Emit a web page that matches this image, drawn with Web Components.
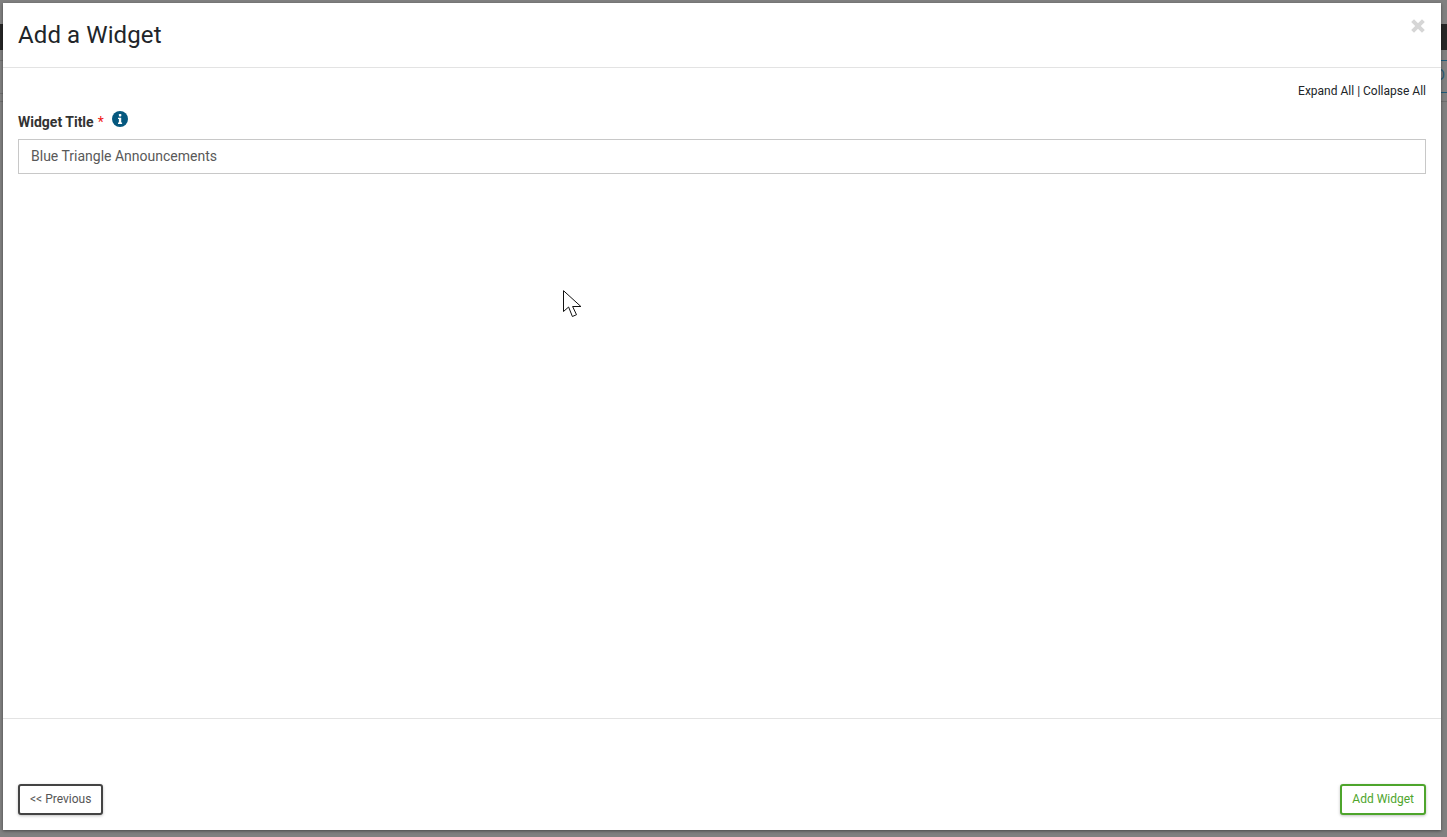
<!DOCTYPE html>
<html lang="en"><head><meta charset="utf-8"><title>Add a Widget</title>
<style>
html,body{margin:0;padding:0;height:100%;overflow:hidden;background:#808080;font-family:Roboto,"Liberation Sans",sans-serif}
</style></head><body>
<backdrop-page></backdrop-page>
<widget-modal heading="Add a Widget">
  <field-row label="Widget Title" value="Blue Triangle Announcements"></field-row>
  <modal-button slot="left" tone="dark">&lt;&lt; Previous</modal-button>
  <modal-button slot="right" tone="green">Add Widget</modal-button>
</widget-modal>
<fake-cursor></fake-cursor>
<script>
function def(name,html,init){customElements.define(name,class extends HTMLElement{
  connectedCallback(){if(this.shadowRoot)return;const r=this.attachShadow({mode:'open'});r.innerHTML=html;if(init)init(this,r);}
});}
def('backdrop-page',`<style>
:host{display:block;height:837px;background:#808080;overflow:hidden}
.gap{height:24px}
.bar{height:26px;background:#262626}
.sub{height:42px;margin-top:10px;border-top:1px solid #6e6e6e;border-bottom:1px solid #6e6e6e;box-sizing:border-box;display:flex;align-items:flex-start}
.left{flex:1;height:33px;border-bottom:1px solid #6e6e6e;box-sizing:border-box}
.tab{width:30px;height:33px;margin-top:-1px;box-sizing:border-box;border-top:1px solid #1d5a78;border-bottom:1px solid #1d5a78;text-align:right;padding-right:2px;font:14px/29px Roboto,sans-serif;color:#2a5a72;white-space:nowrap}
</style><div class="gap"></div><div class="bar"></div>
<div class="sub"><div class="left"></div><div class="tab">D</div></div>`);
def('widget-modal',`<style>
:host{position:absolute;left:3px;top:3px;width:1438px;height:827px;background:#fff;display:flex;flex-direction:column;color:#212529;box-shadow:0 1px 3px rgba(0,0,0,.45)}
header{height:65px;flex:none;box-sizing:border-box;border-bottom:1px solid #e3e3e3;padding:0 15px;display:flex;align-items:flex-start;justify-content:space-between}
h1{margin:17px 0 0;font:400 24px/30px Roboto,sans-serif;letter-spacing:.1px;color:#212529}
.x{width:16px;height:16px;margin:15px 0 0;display:block}
main{flex:1;min-height:0;padding:0 15px;box-sizing:border-box}
.links{display:flex;justify-content:flex-end;margin-top:15px;font:12px/16px Roboto,sans-serif;color:#212529;height:16px}
footer{height:112px;flex:none;box-sizing:border-box;border-top:1px solid #e3e3e3;padding:65px 15px 0;display:flex;justify-content:space-between;align-items:flex-start}
</style>
<header><h1 id="t"></h1><svg class="x" viewBox="0 0 16 16" aria-label="Close"><path d="M2.6 2.6 13.4 13.4M13.4 2.6 2.6 13.4" stroke="#d6d6d6" stroke-width="4" fill="none"/></svg></header>
<main><div class="links">Expand All&nbsp;|&nbsp;Collapse All</div><slot></slot></main>
<footer><slot name="left"></slot><slot name="right"></slot></footer>`,(h,r)=>{r.getElementById('t').textContent=h.getAttribute('heading');});
def('field-row',`<style>
:host{display:block;margin-top:6px}
.l{display:flex;align-items:flex-start;height:34px;font:700 14px/20px Roboto,sans-serif;color:#333}
.l b{font-weight:700;padding-top:7px;line-height:20px}
.s{color:#f01818;font-weight:400;margin-left:4px;padding-top:7px}
svg{width:16px;height:16px;margin:6px 0 0 8px;display:block}
.i{box-sizing:border-box;height:35px;border:1px solid #c8c8c8;padding:0 12px;font:14px/33px Roboto,sans-serif;color:#595959}
</style><div class="l"><b id="n"></b><span class="s">*</span>
<svg viewBox="0 0 16 16"><circle cx="8" cy="8" r="8" fill="#05587f"/><rect x="6.9" y="3" width="2.4" height="2.4" rx=".6" fill="#fff"/><path d="M6 6.7H9.2V11.6H10.1V12.9H6V11.6H6.9V8H6Z" fill="#fff"/></svg></div>
<div class="i" id="v"></div>`,(h,r)=>{r.getElementById('n').textContent=h.getAttribute('label');r.getElementById('v').textContent=h.getAttribute('value');});
def('modal-button',`<style>
:host{display:block;box-sizing:border-box;height:31px;border:2px solid #444;border-radius:3px;padding:0 10px;font:12px/27px Roboto,sans-serif;color:#555;background:#fff;box-shadow:0 1px 3px rgba(0,0,0,.25);white-space:nowrap}
:host([tone=green]){border-color:#4ea52c;color:#4ea52c}
</style><slot></slot>`);
def('fake-cursor',`<style>
:host{position:absolute;left:563px;top:290px;width:19px;height:28px;display:block}
svg{display:block}
</style><svg width="19" height="28" viewBox="0 0 19 28"><path d="M.5.7V21.5L5.6 17 9.4 26.5 13.5 24.7 9.6 16.5H17.9Z" fill="#fff" stroke="#111" stroke-width="1"/></svg>`);
</script>
</body></html>
